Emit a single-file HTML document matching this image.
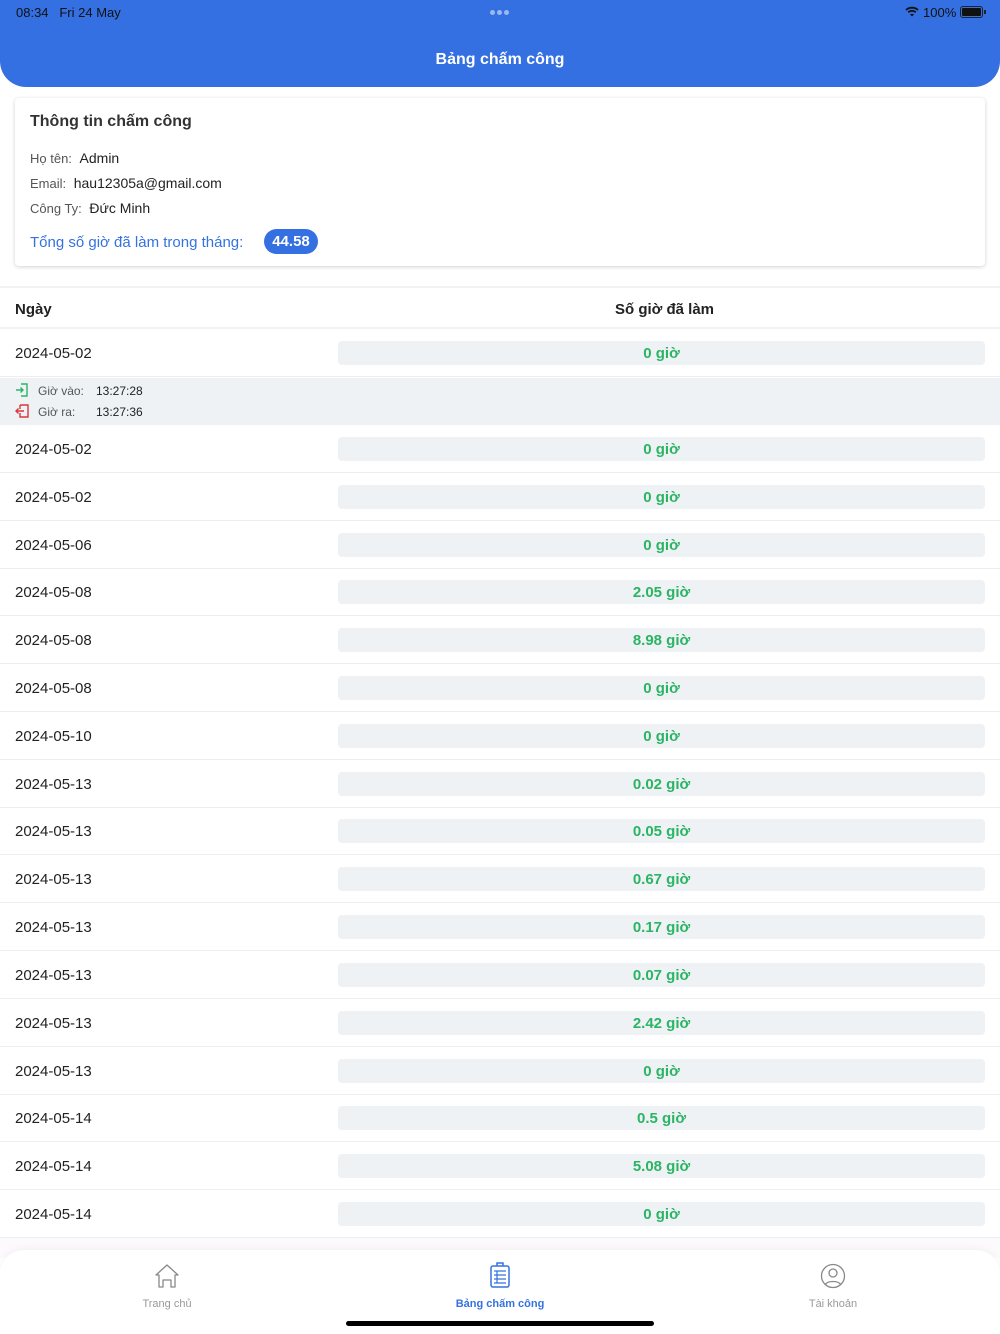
<!DOCTYPE html>
<html><head><meta charset="utf-8"><style>
*{margin:0;padding:0;box-sizing:border-box}
body{width:1000px;height:1334px;position:relative;overflow:hidden;background:#fff;font-family:"Liberation Sans",sans-serif;color:#222}
.hdr{position:absolute;left:0;top:0;width:1000px;height:87px;background:#3570e2;border-radius:0 0 26px 26px}
.st{position:absolute;top:5px;font-size:13px;color:#111}
.title{position:absolute;top:51px;width:1000px;text-align:center;color:#fff;font-size:16px;font-weight:bold}
.card{position:absolute;left:15px;top:98px;width:970px;height:168px;background:#fff;border-radius:4px;box-shadow:0 1px 4px rgba(0,0,0,.18)}
.card .h{position:absolute;left:15px;top:15px;font-size:16px;font-weight:bold;color:#333}
.ln{position:absolute;left:15px;font-size:13px;color:#555}
.ln b{font-weight:normal;color:#222;font-size:14px;margin-left:4px}
.tot{position:absolute;left:15px;top:136px;color:#3572e0;font-size:15px}
.badge{position:absolute;left:249px;top:131px;width:54px;height:25px;border-radius:13px;background:#3570e2;color:#fff;font-weight:bold;font-size:15px;text-align:center;line-height:25px}
.th{position:absolute;top:286px;left:0;width:1000px;height:43px;border-top:2px solid #f0f2f4;border-bottom:2px solid #f0f2f4;font-weight:bold;font-size:15px}
.row{position:absolute;left:0;width:1000px;height:48px;border-bottom:1px solid #eceff2}
.row .d{position:absolute;left:15px;top:16px;font-size:15px;color:#222}
.row .bar{position:absolute;left:338px;top:12px;width:647px;height:24px;background:#eff2f5;border-radius:4px;text-align:center;line-height:26px;color:#2bb464;font-weight:bold;font-size:15px}
.det{position:absolute;left:0;top:378px;width:1000px;height:47px;background:#eff2f5;font-size:12px;color:#555}
.nav{position:absolute;left:0;top:1250px;width:1000px;height:84px;background:#fff;border-radius:24px 24px 0 0;box-shadow:0 -2px 8px rgba(0,0,0,.04)}
.nl{position:absolute;top:48px;font-size:11px;color:#999;text-align:center;width:200px}
</style></head><body>
<div class="hdr">
<div class="st" style="left:16px">08:34&nbsp;&nbsp; Fri 24 May</div>
<div style="position:absolute;left:490px;top:10px;width:20px;height:5px">
<span style="position:absolute;left:0;width:5px;height:5px;border-radius:3px;background:#9bb8f0"></span><span style="position:absolute;left:7px;width:5px;height:5px;border-radius:3px;background:#9bb8f0"></span><span style="position:absolute;left:14px;width:5px;height:5px;border-radius:3px;background:#9bb8f0"></span></div>
<svg style="position:absolute;left:905px;top:6px" width="14" height="11" viewBox="0 0 14 11"><path d="M1 4a9 9 0 0 1 12 0M3.3 6.3a5.5 5.5 0 0 1 7.4 0" stroke="#111" stroke-width="1.8" fill="none"/><path d="M5 8.5L7 10.5L9 8.5a3 3 0 0 0-4 0z" fill="#111"/></svg>
<div class="st" style="left:923px">100%</div>
<div style="position:absolute;left:960px;top:6px;width:23px;height:12px;border:1px solid #222;border-radius:3px;padding:1px"><div style="width:100%;height:100%;background:#111;border-radius:1px"></div></div>
<div style="position:absolute;left:984px;top:10px;width:2px;height:4px;background:#222"></div>
<div class="title">Bảng chấm công</div>
</div>
<div class="card">
<div class="h">Thông tin chấm công</div>
<div class="ln" style="top:52px">Họ tên: <b>Admin</b></div>
<div class="ln" style="top:77px">Email: <b>hau12305a@gmail.com</b></div>
<div class="ln" style="top:102px">Công Ty: <b>Đức Minh</b></div>
<div class="tot">Tổng số giờ đã làm trong tháng:</div>
<div class="badge">44.58</div>
</div>
<div class="th"><span style="position:absolute;left:15px;top:13px">Ngày</span><span style="position:absolute;left:615px;top:13px">Số giờ đã làm</span></div>
<div class="row" style="top:329px"><div class="d">2024-05-02</div><div class="bar">0 giờ</div></div>
<div class="det">
<svg style="position:absolute;left:15px;top:5px" width="14" height="14" viewBox="0 0 14 14"><path d="M6 1h6v12H6M1 7h7M5.5 4.5L8 7 5.5 9.5" stroke="#2bb464" stroke-width="1.4" fill="none"/></svg>
<span style="position:absolute;left:38px;top:6px">Giờ vào:</span><span style="position:absolute;left:96px;top:6px;color:#222">13:27:28</span>
<svg style="position:absolute;left:15px;top:26px" width="14" height="14" viewBox="0 0 14 14"><path d="M5 1h8v12H5V9M5 5V1M1 7h8M3.5 4.5L1 7l2.5 2.5" stroke="#d9363e" stroke-width="1.4" fill="none"/></svg>
<span style="position:absolute;left:38px;top:27px">Giờ ra:</span><span style="position:absolute;left:96px;top:27px;color:#222">13:27:36</span>
</div>
<div class="row" style="top:425px"><div class="d">2024-05-02</div><div class="bar">0 giờ</div></div>
<div class="row" style="top:473px"><div class="d">2024-05-02</div><div class="bar">0 giờ</div></div>
<div class="row" style="top:521px"><div class="d">2024-05-06</div><div class="bar">0 giờ</div></div>
<div class="row" style="top:568px"><div class="d">2024-05-08</div><div class="bar">2.05 giờ</div></div>
<div class="row" style="top:616px"><div class="d">2024-05-08</div><div class="bar">8.98 giờ</div></div>
<div class="row" style="top:664px"><div class="d">2024-05-08</div><div class="bar">0 giờ</div></div>
<div class="row" style="top:712px"><div class="d">2024-05-10</div><div class="bar">0 giờ</div></div>
<div class="row" style="top:760px"><div class="d">2024-05-13</div><div class="bar">0.02 giờ</div></div>
<div class="row" style="top:807px"><div class="d">2024-05-13</div><div class="bar">0.05 giờ</div></div>
<div class="row" style="top:855px"><div class="d">2024-05-13</div><div class="bar">0.67 giờ</div></div>
<div class="row" style="top:903px"><div class="d">2024-05-13</div><div class="bar">0.17 giờ</div></div>
<div class="row" style="top:951px"><div class="d">2024-05-13</div><div class="bar">0.07 giờ</div></div>
<div class="row" style="top:999px"><div class="d">2024-05-13</div><div class="bar">2.42 giờ</div></div>
<div class="row" style="top:1047px"><div class="d">2024-05-13</div><div class="bar">0 giờ</div></div>
<div class="row" style="top:1094px"><div class="d">2024-05-14</div><div class="bar">0.5 giờ</div></div>
<div class="row" style="top:1142px"><div class="d">2024-05-14</div><div class="bar">5.08 giờ</div></div>
<div class="row" style="top:1190px"><div class="d">2024-05-14</div><div class="bar">0 giờ</div></div>
<div style="position:absolute;left:0;top:1238px;width:1000px;height:20px;background:#fcfafc"></div>
<div class="nav">
<svg style="position:absolute;left:154px;top:13px" width="26" height="26" viewBox="0 0 26 26"><path d="M2 12L13 2l11 10h-3v12h-4v-7h-8v7H5V12z" stroke="#888" stroke-width="1.3" fill="none" stroke-linejoin="round"/></svg>
<div class="nl" style="left:67px">Trang chủ</div>
<svg style="position:absolute;left:489px;top:12px" width="22" height="26" viewBox="0 0 22 26"><rect x="2" y="4" width="18" height="21" rx="2" stroke="#3572e0" stroke-width="1.5" fill="none"/><path d="M8 4V1h6v3" stroke="#3572e0" stroke-width="1.5" fill="none"/><path d="M5 9h12M5 13h12M5 17h12M5 21h12M8 9v12" stroke="#3572e0" stroke-width="1.2"/></svg>
<div class="nl" style="left:400px;color:#3572e0;font-weight:bold">Bảng chấm công</div>
<svg style="position:absolute;left:820px;top:13px" width="26" height="26" viewBox="0 0 26 26"><circle cx="13" cy="13" r="11.5" stroke="#888" stroke-width="1.3" fill="none"/><circle cx="13" cy="10" r="4" stroke="#888" stroke-width="1.3" fill="none"/><path d="M5.5 21.5c2-4 13-4 15 0" stroke="#888" stroke-width="1.3" fill="none"/></svg>
<div class="nl" style="left:733px">Tài khoản</div>
<div style="position:absolute;left:346px;top:71px;width:308px;height:5px;border-radius:3px;background:#000"></div>
</div>
</body></html>
